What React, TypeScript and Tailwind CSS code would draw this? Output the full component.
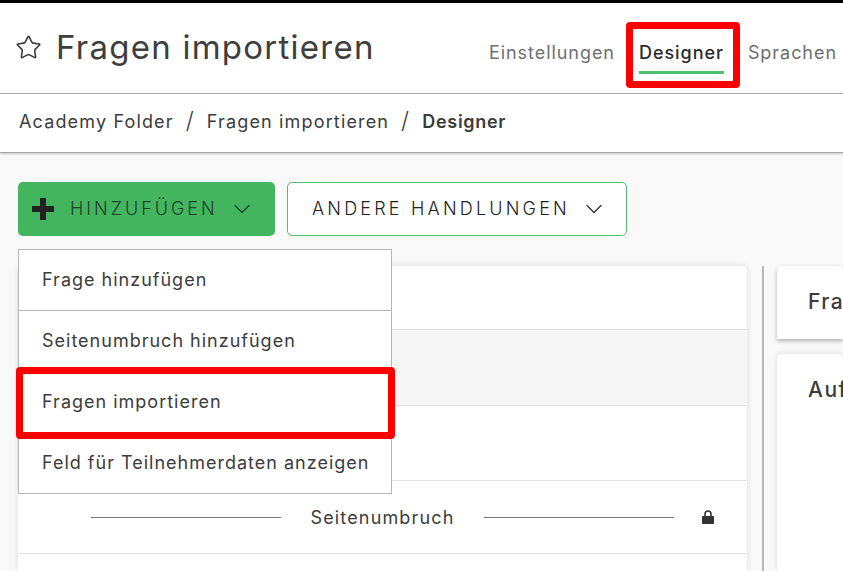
import { ChevronDown, Star } from "lucide-react";

const font = "font-['Inter','Liberation_Sans',sans-serif]";

function PlusIcon() {
    return (
        <svg width="22" height="22" viewBox="0 0 22 22" className="text-[#222]">
            <path d="M8 0h6v8h8v6h-8v8H8v-8H0V8h8z" fill="currentColor" />
        </svg>
    );
}

function LockIcon() {
    return (
        <svg width="12" height="14" viewBox="0 0 12 14" className="ml-[28px] text-[#333]">
            <path d="M3 6V4a3 3 0 0 1 6 0v2" fill="none" stroke="currentColor" strokeWidth="1.6" />
            <rect x="0" y="6" width="12" height="8" rx="1" fill="currentColor" />
        </svg>
    );
}

function Header() {
    return (
        <div className="h-[91px] shrink-0 flex items-center justify-between bg-white border-b border-[#a8a8a8] shadow-[0_1px_2px_rgba(0,0,0,0.2)] pl-[15px] pr-[6px] relative z-10">
            <div className="flex items-center gap-[14px] pb-[2px]">
                <Star size={27} strokeWidth={1.4} className="text-[#3a3a3a]" />
                <h1 className="text-[33px] leading-none text-[#3e3e3e] tracking-[1.25px]">Fragen importieren</h1>
            </div>
            <nav className="flex items-center gap-[24px] text-[18px] tracking-[0.95px] text-[#6f6f6f] pt-[8px]">
                <span>Einstellungen</span>
                <span className="relative text-[#2b2b2b] font-medium">
                    Designer
                    <span className="absolute left-0 right-0 -bottom-[8px] h-[3px] bg-[#4cc06f]" />
                </span>
                <span>Sprachen</span>
            </nav>
        </div>
    );
}

function Breadcrumb() {
    return (
        <div className="h-[59px] shrink-0 flex items-center gap-[12px] bg-white border-b border-[#a8a8a8] shadow-[0_1px_2px_rgba(0,0,0,0.2)] pl-[19px] pb-[4px] text-[18px] tracking-[1.15px] text-[#3c3c3c] relative z-10">
            <span>Academy Folder</span>
            <span className="text-[23px] font-light leading-none">/</span>
            <span>Fragen importieren</span>
            <span className="text-[23px] font-light leading-none">/</span>
            <span className="font-semibold tracking-[0.7px]">Designer</span>
        </div>
    );
}

function Toolbar() {
    return (
        <div className="flex gap-[12px] shrink-0">
            <button className="w-[257px] h-[54px] flex items-center pl-[14px] rounded-[5px] bg-[#43b55f] text-[#22402c]">
                <PlusIcon />
                <span className="ml-[16px] pb-[1px] text-[18px] font-light tracking-[3px]">HINZUFÜGEN</span>
                <ChevronDown size={28} strokeWidth={1.2} className="ml-[10px] text-[#22402c]" />
            </button>
            <button className="w-[340px] h-[54px] flex items-center pl-[24px] rounded-[5px] bg-white border border-[#4cc06f] text-[#222]">
                <span className="pb-[1px] text-[18px] font-light tracking-[3.2px]">ANDERE HANDLUNGEN</span>
                <ChevronDown size={28} strokeWidth={1.2} className="ml-[10px] text-[#333]" />
            </button>
        </div>
    );
}

function Card() {
    return (
        <div className="w-[729px] bg-white rounded-t-[5px] shadow-[0_0_6px_rgba(0,0,0,0.12)] flex flex-col overflow-hidden">
            <div className="h-[64px] shrink-0 border-b border-[#e4e4e4]" />
            <div className="h-[76px] shrink-0 border-b border-[#e4e4e4] bg-[#f6f6f6]" />
            <div className="h-[75px] shrink-0 border-b border-[#e4e4e4]" />
            <div className="h-[73px] shrink-0 border-b border-[#e4e4e4] flex items-center pl-[73px] text-[18px] tracking-[1.15px] text-[#3c3c3c]">
                <span className="w-[190px] h-px bg-[#777]" />
                <span className="w-[203px] text-center">Seitenumbruch</span>
                <span className="w-[190px] h-px bg-[#777]" />
                <LockIcon />
            </div>
        </div>
    );
}

function SidePanel() {
    return (
        <div className="flex-1 flex flex-col gap-[15px] min-w-0">
            <div className="h-[73px] shrink-0 bg-white rounded-t-[5px] shadow-[0_2px_4px_rgba(0,0,0,0.3)] pl-[31px] pt-[24px] text-[21px] tracking-[1.5px] leading-6 font-medium text-[#3c3c3c] overflow-hidden whitespace-nowrap">
                Fragen
            </div>
            <div className="flex-1 bg-white rounded-t-[5px] shadow-[0_0_6px_rgba(0,0,0,0.12)] pl-[31px] pt-[24px] text-[21px] tracking-[1.5px] leading-6 font-medium text-[#3c3c3c] overflow-hidden whitespace-nowrap">
                Aufgaben
            </div>
        </div>
    );
}

function Dropdown() {
    const items = ["Frage hinzufügen", "Seitenumbruch hinzufügen", "Fragen importieren", "Feld für Teilnehmerdaten anzeigen"];
    return (
        <div className="absolute left-[18px] top-[246px] w-[374px] bg-white border border-[#b5b5b5] z-20">
            {items.map((item, i) => (
                <div
                    key={item}
                    className={
                        i < 3
                            ? "h-[61px] flex items-center pl-[23px] pb-[1px] text-[18px] text-[#3c3c3c] tracking-[1px] border-b border-[#b5b5b5]"
                            : "h-[60px] flex items-center pl-[23px] pb-[1px] text-[18px] text-[#3c3c3c] tracking-[1px]"
                    }
                >
                    {item}
                </div>
            ))}
        </div>
    );
}

export default function App() {
    return (
        <div className={`${font} relative w-[843px] h-[571px] overflow-hidden bg-[#f9f9f9] border-t-[3px] border-black flex flex-col`}>
            <Header />
            <Breadcrumb />
            <div className="flex-1 flex flex-col gap-[30px] pl-[18px] pt-[29px] min-h-0">
                <Toolbar />
                <div className="flex-1 flex min-h-0">
                    <Card />
                    <div className="w-[2px] bg-[#b8b8b8] ml-[15px] mr-[13px]" />
                    <SidePanel />
                </div>
            </div>
            <Dropdown />
            <div className="absolute left-[626px] top-[19px] w-[114px] h-[66px] border-[7px] border-[#ff0000] rounded-[4px] z-30" />
            <div className="absolute left-[16px] top-[364px] w-[379px] h-[72px] border-[7px] border-[#ff0000] rounded-[4px] z-30" />
        </div>
    );
}
